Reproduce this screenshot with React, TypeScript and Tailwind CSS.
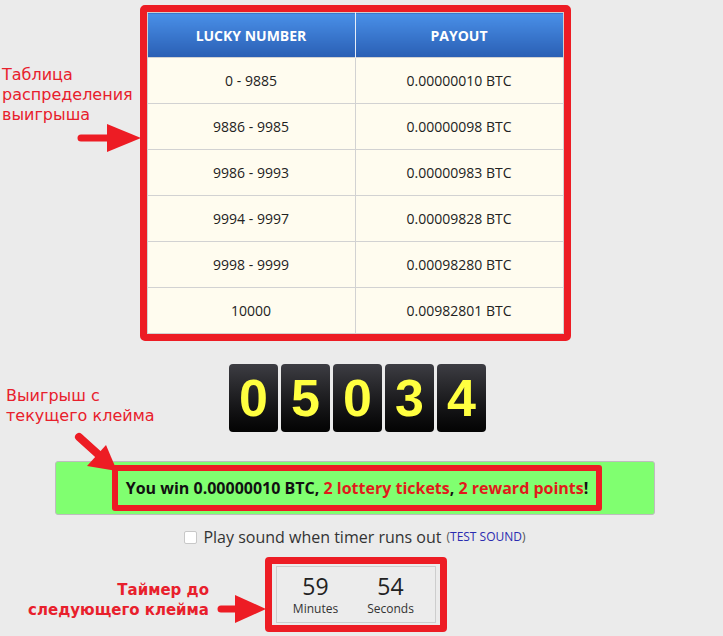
const rows = [
  ["0 - 9885", "0.00000010 BTC"],
  ["9886 - 9985", "0.00000098 BTC"],
  ["9986 - 9993", "0.00000983 BTC"],
  ["9994 - 9997", "0.00009828 BTC"],
  ["9998 - 9999", "0.00098280 BTC"],
  ["10000", "0.00982801 BTC"],
];

const digits = ["0", "5", "0", "3", "4"];

function Arrows() {
  return (
    <svg className="pointer-events-none absolute inset-0" width="723" height="636" viewBox="0 0 723 636">
      <g fill="#ed1c24" stroke="#ed1c24">
        {/* table arrow */}
        <line x1="81" y1="138" x2="110" y2="138" strokeWidth="7" strokeLinecap="round" />
        <polygon points="107,124 141,138 107,152" stroke="none" />
        {/* win arrow */}
        <line x1="79" y1="437" x2="100" y2="456" strokeWidth="8" strokeLinecap="round" />
        <polygon points="87,466 106,445 117,471" stroke="none" />
        {/* timer arrow */}
        <line x1="221" y1="609" x2="240" y2="609" strokeWidth="7" strokeLinecap="round" />
        <polygon points="235,595 266,609 235,623" stroke="none" />
      </g>
    </svg>
  );
}

export default function App() {
  return (
    <main className="relative min-h-[636px] w-full overflow-hidden bg-[#ebebeb] font-['Open_Sans',sans-serif]">
      <div className="flex w-[710px] flex-col items-center pt-[5px]">
        <div className="rounded-[5px] border-[7px] border-[#ed1c24]">
          <table className="w-[417px] border-collapse border border-[#cfcfcf] text-center">
            <thead>
              <tr>
                <th className="h-[45px] w-1/2 border-r border-[#e8eef8] bg-linear-to-b from-[#4a90e8] to-[#2a5fb4] text-[14px] font-bold text-white">
                  LUCKY NUMBER
                </th>
                <th className="h-[45px] w-1/2 bg-linear-to-b from-[#4a90e8] to-[#2a5fb4] text-[14px] font-bold text-white">
                  PAYOUT
                </th>
              </tr>
            </thead>
            <tbody>
              {rows.map(([range, pay]) => (
                <tr key={range}>
                  <td className="h-[46px] border border-[#d2d2d2] bg-[#fffcef] text-[14px] text-[#222]">{range}</td>
                  <td className="h-[46px] border border-[#d2d2d2] bg-[#fffcef] text-[14px] text-[#222]">{pay}</td>
                </tr>
              ))}
            </tbody>
          </table>
        </div>

        <div className="mt-[23px] ml-[5px] flex gap-[3px]">
          {digits.map((d, i) => (
            <div
              key={i}
              className="flex h-[68px] w-[49px] items-center justify-center rounded-[4px] bg-linear-to-b from-[#3d3d43] to-[#040404] font-['Liberation_Sans',sans-serif] text-[52px] font-bold leading-none text-[#ffff40]"
            >
              {d}
            </div>
          ))}
        </div>

        <div className="mt-[29px] flex h-[54px] w-[600px] items-center justify-center rounded-[3px] border border-[#bdbdbd] bg-[#80ff70]">
          <div className="ml-[4px] flex h-[46px] w-[490px] items-center justify-center rounded-[3px] border-[6px] border-[#ed1c24]">
            <p className="text-[16px] font-bold text-[#111]">
              You win 0.00000010 BTC, <span className="text-[#e01b1b]">2 lottery tickets</span>,{" "}
              <span className="text-[#e01b1b]">2 reward points</span>!
            </p>
          </div>
        </div>

        <label className="mt-[10px] flex h-[24px] items-center text-[16px] text-[#333]">
          <input type="checkbox" className="mr-[6px] h-[13px] w-[13px] appearance-none rounded-[2px] border border-[#c8c8c8] bg-white" />
          Play sound when timer runs out
          <span className="ml-[5px] text-[12px] text-[#555]">
            (<span className="text-[#2b2bb0]">TEST SOUND</span>)
          </span>
        </label>

        <div className="mt-[8px] ml-[2px] rounded-[4px] border-[7px] border-[#ed1c24] px-[4px] py-[2px]">
          <div className="flex h-[57px] w-[160px] justify-center gap-[5px] border border-[#cdcdcd] bg-[#ececec] pr-[6px] pt-[3px] text-[#222]">
            <div className="flex w-[70px] flex-col items-center">
              <span className="text-[23px] leading-[32px]">59</span>
              <span className="text-[12px] leading-[14px] text-[#333]">Minutes</span>
            </div>
            <div className="flex w-[70px] flex-col items-center">
              <span className="text-[23px] leading-[32px]">54</span>
              <span className="text-[12px] leading-[14px] text-[#333]">Seconds</span>
            </div>
          </div>
        </div>
      </div>

      <div className="absolute left-[2px] top-[65px] font-['DejaVu_Sans',sans-serif] text-[16px] leading-[20px] text-[#e8202c]">
        Таблица
        <br />
        распределения
        <br />
        выигрыша
      </div>
      <div className="absolute left-[6px] top-[386px] font-['DejaVu_Sans',sans-serif] text-[16px] leading-[20px] text-[#e8202c]">
        Выигрыш с
        <br />
        текущего клейма
      </div>
      <div className="absolute left-0 top-[580px] w-[209px] text-right font-['DejaVu_Sans',sans-serif] text-[15px] font-bold leading-[20px] text-[#e8202c]">
        Таймер до
        <br />
        следующего клейма
      </div>

      <Arrows />
    </main>
  );
}
